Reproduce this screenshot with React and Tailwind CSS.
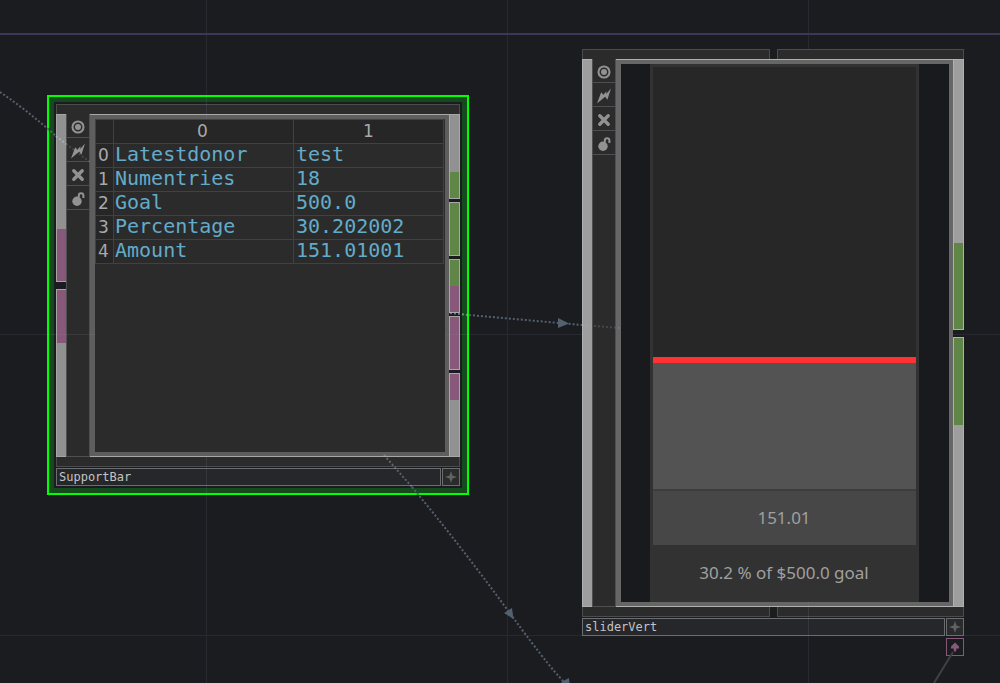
import React from "react";

const rows = [
  ["Latestdonor", "test"],
  ["Numentries", "18"],
  ["Goal", "500.0"],
  ["Percentage", "30.202002"],
  ["Amount", "151.01001"],
];

const mono = "font-['Noto_Mono','DejaVu_Sans_Mono',monospace]";
const headCell =
  "border border-[#414141] bg-[#262626] p-0 pb-0.5 font-['DejaVu_Sans',sans-serif] text-[17px] leading-5 font-normal text-[#a9a9a9]";

function ViewIcon() {
  return (
    <svg width="14" height="14" viewBox="0 0 14 14" aria-hidden="true">
      <circle cx="7" cy="7" r="5.5" fill="none" stroke="#929292" strokeWidth="2.1" />
      <circle cx="7" cy="7" r="3" fill="#929292" />
    </svg>
  );
}

function BoltIcon() {
  return (
    <svg width="14" height="16" viewBox="0 0 14 16" aria-hidden="true">
      <path d="M14 0.5 L10.4 11.8 L8.2 8.8 L6.6 10 L0 15.6 L4.2 4.2 L6.4 6.8 L9.4 3.2 L9.2 6 Z" fill="#929292" />
    </svg>
  );
}

function CrossIcon() {
  return (
    <svg width="14" height="14" viewBox="0 0 14 14" aria-hidden="true">
      <path d="M2.8 2.8 L11.2 11.2 M11.2 2.8 L2.8 11.2" stroke="#929292" strokeWidth="3.4" strokeLinecap="round" />
    </svg>
  );
}

function LockIcon() {
  return (
    <svg width="14" height="14" viewBox="0 0 14 14" aria-hidden="true">
      <circle cx="6" cy="9.2" r="4.7" fill="#929292" />
      <path d="M7.8 5.5 V3.6 C7.8 0.4 12.4 0.4 12.4 3.6 V6" fill="none" stroke="#929292" strokeWidth="2" />
    </svg>
  );
}

function PlusIcon() {
  return (
    <svg width="12" height="12" viewBox="0 0 12 12" aria-hidden="true">
      <path d="M6 0 L7.5 4.5 L12 6 L7.5 7.5 L6 12 L4.5 7.5 L0 6 L4.5 4.5 Z" fill="#626262" />
    </svg>
  );
}

function Toolbar() {
  const tools = [
    ["Viewer active", ViewIcon],
    ["Bypass", BoltIcon],
    ["Close", CrossIcon],
    ["Lock", LockIcon],
  ];
  return (
    <div className="flex w-6 shrink-0 flex-col border-x border-b border-[#4e4f51] bg-[#2b2b2b]">
      {tools.map(([label, Icon]) => (
        <button key={label} aria-label={label} className="flex h-6 items-center justify-center border-b border-[#4e4f51] pt-0.5">
          <Icon />
        </button>
      ))}
    </div>
  );
}

function NameRow({ id, value }) {
  return (
    <div className="mt-px flex gap-px">
      <input
        id={id}
        aria-label="Node name"
        defaultValue={value}
        className={`h-[18px] min-w-0 flex-1 border border-[#6b6d70] bg-[#25272a] px-0.5 text-xs leading-4 text-[#c4c4c4] outline-none ${mono}`}
      />
      <button aria-label="Expand" className="flex size-[18px] items-center justify-center border border-[#6b6d70] bg-[#2a2b2b]">
        <PlusIcon />
      </button>
    </div>
  );
}

function SupportNode() {
  return (
    <section className="absolute left-[47px] top-[95px] w-[422px] border-2 border-[#00ff00] bg-[#144a1c] p-[5px]">
      <div className="bg-[#1b1c20] p-0.5">
        <div className="h-2.5 border border-b-0 border-[#4b4c4f] bg-[#2b2b2b]" />
        <div className="flex h-[343px]">
          <div className="flex w-2.5 shrink-0 flex-col gap-[7px]">
            <div className="flex flex-1 flex-col border border-r-0 border-[#a5a5a5] bg-[#919191]">
              <div className="mt-auto h-[52px] bg-[#875879]" />
            </div>
            <div className="flex-1 border border-r-0 border-[#a5a5a5] bg-[#919191]">
              <div className="h-[53px] bg-[#875879]" />
            </div>
          </div>
          <Toolbar />
          <div className="min-w-0 flex-1 border-y border-[#a8a8a8] bg-[#5e5e5e] px-1 pb-1 pt-1 pl-[5px]">
            <div className="h-full bg-[#2b2b2b] pr-px">
              <table className={`w-full table-fixed border-collapse text-xl leading-5 text-[#63abc8] ${mono}`}>
                <colgroup>
                  <col className="w-[18px]" />
                  <col className="w-[180px]" />
                  <col />
                </colgroup>
                <thead>
                  <tr className="h-6">
                    <th aria-label="Row" className={headCell} />
                    <th className={`${headCell} pr-0.5`}>0</th>
                    <th className={headCell}>1</th>
                  </tr>
                </thead>
                <tbody>
                  {rows.map(([name, value], i) => (
                    <tr key={name} className="h-6">
                      <th className={`${headCell} pr-0.5`}>{i}</th>
                      <td className="border border-[#414141] p-0 pb-[3px] pl-px">{name}</td>
                      <td className="border border-[#414141] p-0 pb-[3px] pl-0.5">{value}</td>
                    </tr>
                  ))}
                </tbody>
              </table>
            </div>
          </div>
          <div className="flex w-[11px] shrink-0 flex-col gap-[3px]">
            <div className="flex h-[85px] flex-col border border-[#a8a8a8] bg-[#919191]">
              <div className="mt-auto h-[26px] bg-[#5f8646]" />
            </div>
            <div className="h-[54px] border border-[#a8a8a8] bg-[#5f8646]" />
            <div className="h-[54px] border border-[#a8a8a8] bg-[#875879]">
              <div className="h-[26px] bg-[#5f8646]" />
            </div>
            <div className="h-[54px] border border-[#a8a8a8] bg-[#875879]" />
            <div className="flex-1 border border-[#a8a8a8] bg-[#919191]">
              <div className="h-[26px] bg-[#875879]" />
            </div>
          </div>
        </div>
        <div className="h-2.5 border border-t-0 border-[#4b4c4f] bg-[#2b2b2b]" />
        <NameRow id="support-name" value="SupportBar" />
      </div>
    </section>
  );
}

function SliderNode() {
  return (
    <section className="absolute left-[582px] top-[49px] w-[382px]">
      <div className="flex h-2.5 gap-[7px]">
        <div className="flex-1 border border-b-0 border-[#4b4c4f] bg-[#2b2b2b]" />
        <div className="flex-1 border border-b-0 border-[#4b4c4f] bg-[#2b2b2b]" />
      </div>
      <div className="flex h-[548px]">
        <div className="w-2.5 shrink-0 border border-r-0 border-[#b0b0b0] bg-[#9e9e9e]" />
        <Toolbar />
        <div className="flex min-w-0 flex-1 justify-center border-y border-[#b0b0b0] bg-[#666666] px-1 pb-1 pt-1 pl-[5px]">
          <div className="flex flex-1 justify-center bg-[#191a1d] pr-0.5">
            <div className="flex w-[269px] flex-col bg-[#323232] px-[3px] pt-[3px] font-['Noto_Sans',sans-serif] text-[17px] leading-6 text-[#a0a0a0]">
              <div className="h-[290px] bg-[#272727]" />
              <div className="h-1.5 bg-[#ff3131]" />
              <div className="h-32 border-b-2 border-[#3d3d3d] bg-[#535353]" />
              <div className="flex h-[54px] items-center justify-center bg-[#474747]">151.01</div>
              <div className="flex flex-1 items-center justify-center pb-0.5">30.2 % of $500.0 goal</div>
            </div>
          </div>
        </div>
        <div className="flex w-[11px] shrink-0 flex-col gap-[7px]">
          <div className="flex h-[271px] flex-col border border-[#b0b0b0] bg-[#9e9e9e]">
            <div className="mt-auto h-[86px] bg-[#5f8646]" />
          </div>
          <div className="flex-1 border border-[#b0b0b0] bg-[#9e9e9e]">
            <div className="h-[87px] bg-[#5f8646]" />
          </div>
        </div>
      </div>
      <div className="flex h-2.5 gap-[7px]">
        <div className="flex-1 border border-t-0 border-[#4b4c4f] bg-[#2b2b2b]" />
        <div className="flex-1 border border-t-0 border-[#4b4c4f] bg-[#2b2b2b]" />
      </div>
      <NameRow id="slider-name" value="sliderVert" />
      <button aria-label="Parent" className="mt-0.5 ml-auto flex size-[18px] items-center justify-center border border-[#875879]">
        <svg width="10" height="12" viewBox="0 0 10 12" aria-hidden="true">
          <path d="M5 1.5 L9 5.5 V7.5 H6.5 L6 10.5 H4 L3.5 7.5 H1 V5.5 Z" fill="#875879" />
        </svg>
      </button>
    </section>
  );
}

function Grid() {
  return (
    <svg className="absolute inset-0 size-full" aria-hidden="true">
      <g stroke="#282930" strokeWidth="1">
        <line x1="206.5" y1="0" x2="206.5" y2="100%" />
        <line x1="507.5" y1="0" x2="507.5" y2="100%" />
        <line x1="808.5" y1="0" x2="808.5" y2="100%" />
        <line x1="0" y1="334.5" x2="100%" y2="334.5" />
        <line x1="0" y1="635.5" x2="100%" y2="635.5" />
      </g>
      <line x1="0" y1="34" x2="100%" y2="34" stroke="#39395a" strokeWidth="2" />
    </svg>
  );
}

function Wires() {
  return (
    <svg className="pointer-events-none absolute inset-0 size-full" aria-hidden="true">
      <g fill="none" stroke="#53616e" strokeWidth="2" strokeDasharray="2 2">
        <path d="M0 92 Q28 111 56 136" />
        <path d="M469 315 L582 325" />
        <path d="M412 487 Q460 545 509 612 T566 683" />
      </g>
      <g fill="none" stroke="#a9bac9" strokeWidth="2" strokeDasharray="2 2">
        <path d="M56 136 L66 144" opacity="0.8" />
        <path d="M66 144 L90 162" opacity="0.2" />
        <path d="M450 313 L469 315" opacity="0.6" />
        <path d="M582 325 L620 328" opacity="0.2" />
        <path d="M384 455 L412 487" opacity="0.4" />
      </g>
      <g fill="#53616e">
        <path d="M558 318 L569 323.5 L558 328 Z" />
        <path d="M512 608 L513.5 619 L504 613 Z" />
        <path d="M569 678 L570 689 L561 682 Z" />
      </g>
      <line x1="934" y1="683" x2="953" y2="652" stroke="#404142" strokeWidth="2" />
      <g stroke="#9090b0" strokeWidth="1" opacity="0.14">
        <path d="M206.5 97 V119 M206.5 457 V493 M49 334.5 H95 M445 334.5 H467 M808.5 602 V636" />
      </g>
    </svg>
  );
}

export default function App() {
  return (
    <main className="relative min-h-screen w-full overflow-hidden bg-[#1b1c20]">
      <Grid />
      <SupportNode />
      <SliderNode />
      <Wires />
    </main>
  );
}
